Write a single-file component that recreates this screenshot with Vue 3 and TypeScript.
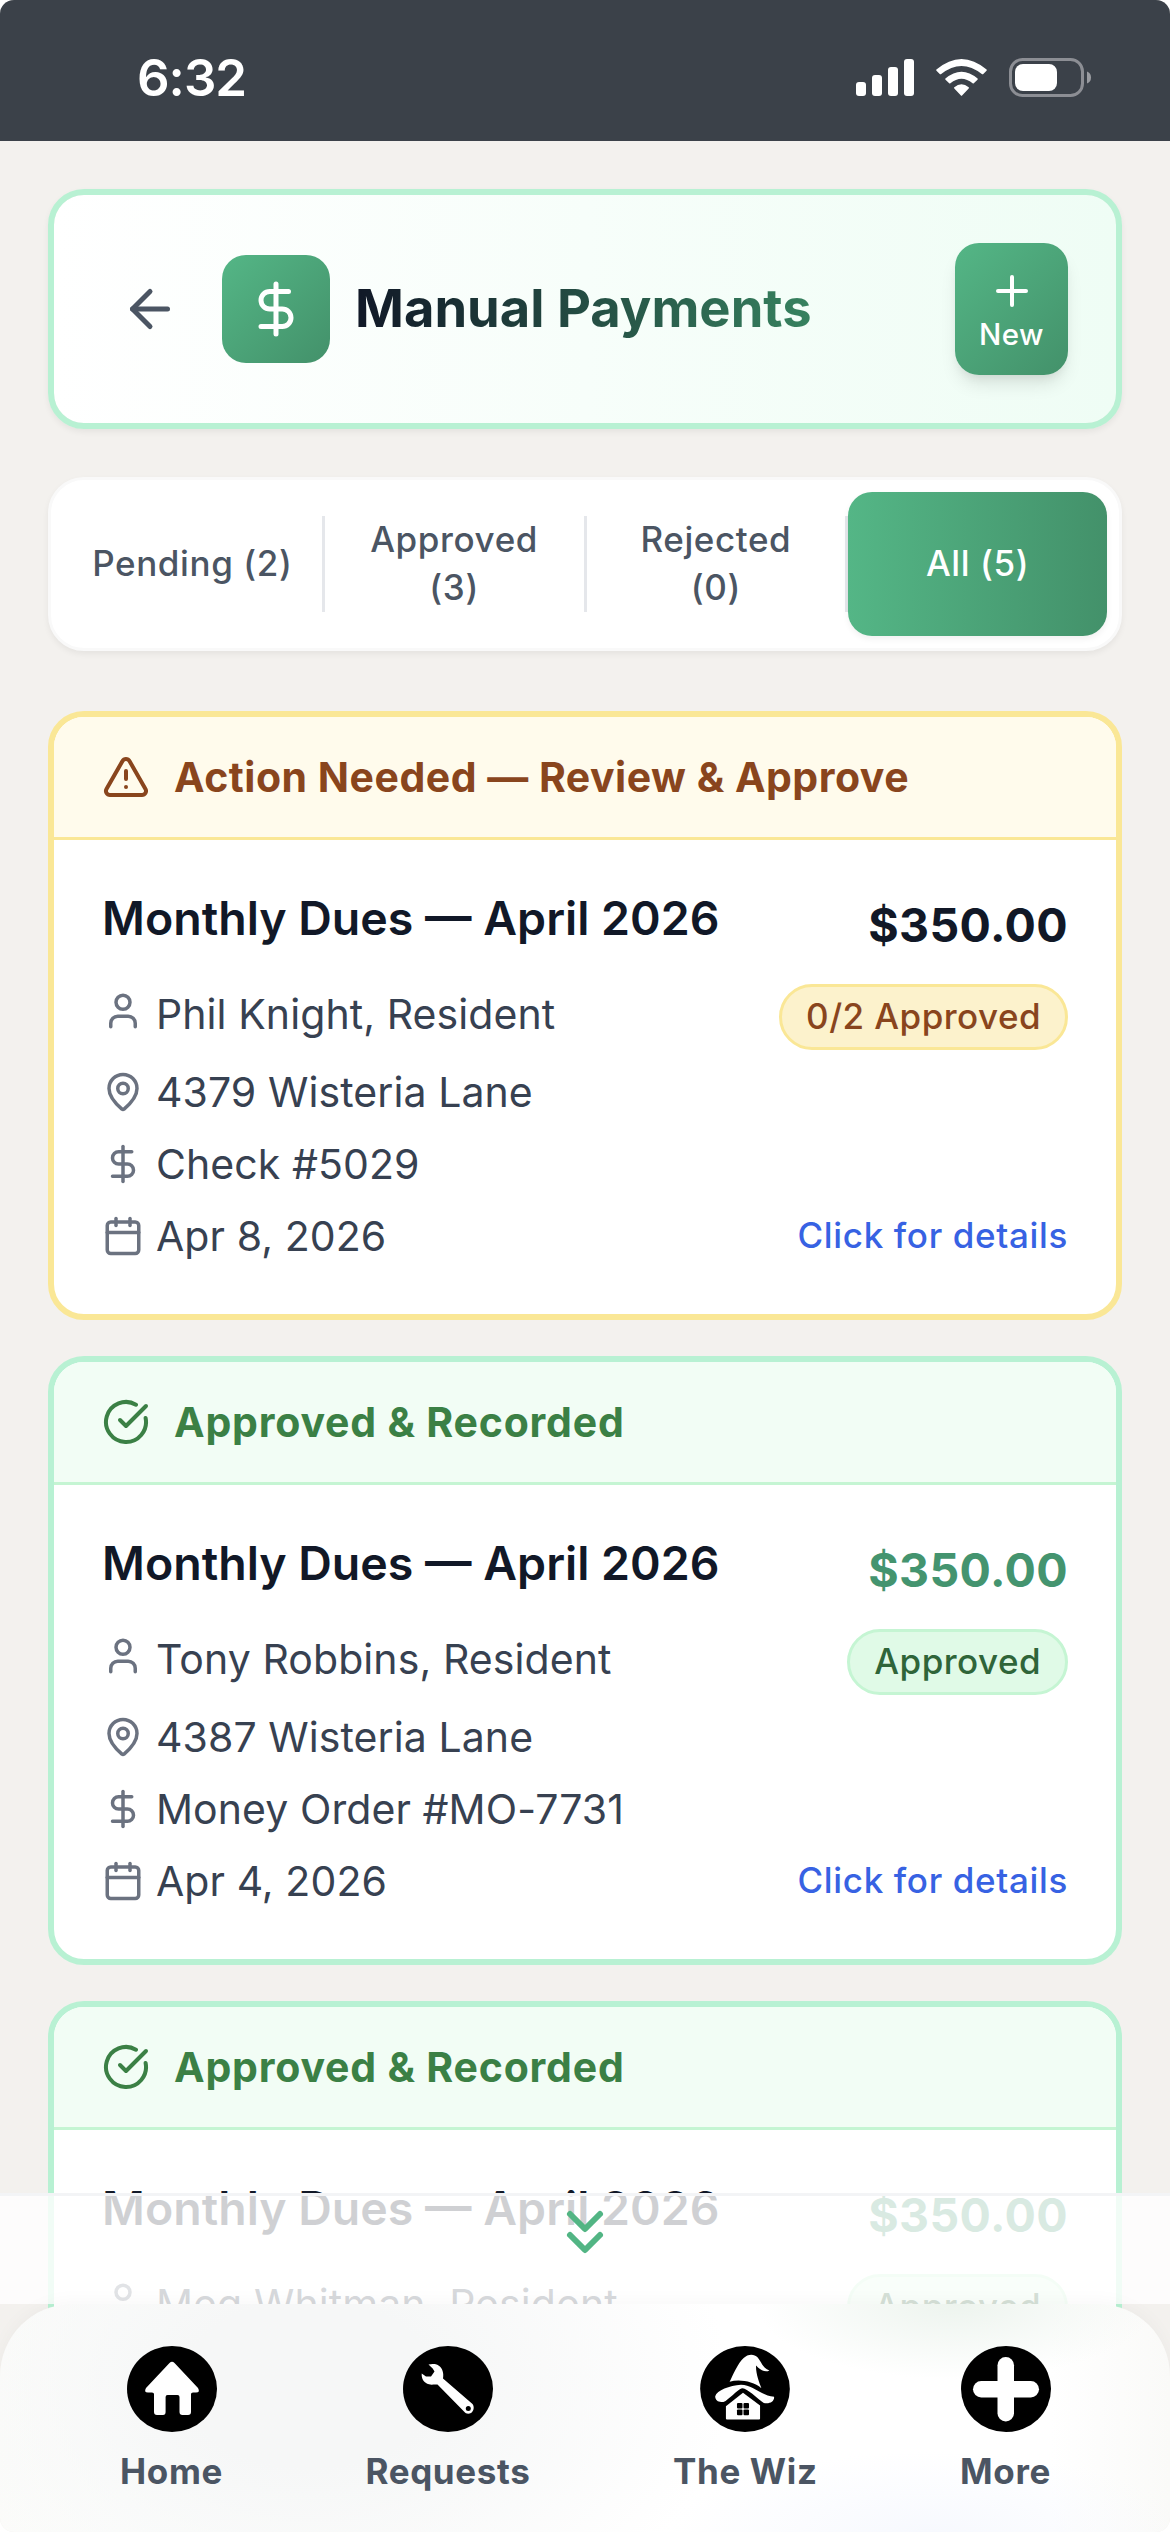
<script setup lang="ts">
interface Tab {
  label: string
  active?: boolean
}

interface Payment {
  id: number
  status: 'pending' | 'approved'
  heading: string
  title: string
  amount: string
  payer: string
  badge: string
  address?: string
  method?: string
  date?: string
}

const tabs: Tab[] = [
  { label: 'Pending (2)' },
  { label: 'Approved (3)' },
  { label: 'Rejected (0)' },
  { label: 'All (5)', active: true },
]

const payments: Payment[] = [
  {
    id: 1,
    status: 'pending',
    heading: 'Action Needed — Review & Approve',
    title: 'Monthly Dues — April 2026',
    amount: '$350.00',
    payer: 'Phil Knight, Resident',
    address: '4379 Wisteria Lane',
    method: 'Check #5029',
    date: 'Apr 8, 2026',
    badge: '0/2 Approved',
  },
  {
    id: 2,
    status: 'approved',
    heading: 'Approved & Recorded',
    title: 'Monthly Dues — April 2026',
    amount: '$350.00',
    payer: 'Tony Robbins, Resident',
    address: '4387 Wisteria Lane',
    method: 'Money Order #MO-7731',
    date: 'Apr 4, 2026',
    badge: 'Approved',
  },
  {
    id: 3,
    status: 'approved',
    heading: 'Approved & Recorded',
    title: 'Monthly Dues — April 2026',
    amount: '$350.00',
    payer: 'Meg Whitman, Resident',
    badge: 'Approved',
  },
]
</script>

<template>
  <div class="screen">
    <div class="status-bar">
      <span class="clock">6:32</span>
      <svg class="status-icons" width="236" height="40" viewBox="856 58 236 40">
        <g fill="#fff">
          <rect x="856" y="82" width="10" height="14" rx="3" />
          <rect x="872" y="75" width="10" height="21" rx="3" />
          <rect x="888" y="67" width="10" height="29" rx="3" />
          <rect x="904" y="59" width="10" height="37" rx="3" />
          <path d="M936.4 69.6 Q961.5 48.400 986.600 69.600 Q987 70.200 986.500 70.800 L983 74.200 Q982.400 74.500 981.800 74.100 Q961.500 57.900 941.200 74.100 Q940.600 74.500 940 74.200 L936.500 70.800 Q936 70.200 936.400 69.600Z" />
          <path d="M945.400 78.500 Q961.500 64.800 977.600 78.500 Q978.100 79.100 977.500 79.700 L973.800 83.300 Q973.200 83.700 972.600 83.300 Q961.500 74.100 950.400 83.300 Q949.800 83.700 949.200 83.300 L945.500 79.700 Q944.900 79.100 945.400 78.500Z" />
          <path d="M954.300 87.200 Q961.500 81.400 968.700 87.200 Q969.300 87.800 968.700 88.500 L962.300 95.200 Q961.500 96.300 960.700 95.200 L954.300 88.500 Q953.700 87.800 954.300 87.200Z" />
          <rect x="1015" y="64" width="42" height="27" rx="8" />
        </g>
        <rect x="1010.500" y="59.500" width="72" height="36" rx="12" fill="none" stroke="#8c8e94" stroke-width="3" />
        <path d="M1087 71.500 Q1091 73 1091 77.500 Q1091 82 1087 83.500Z" fill="#9a9ca1" />
      </svg>
    </div>

    <main class="content">
      <header class="page-header">
        <svg class="icon back" width="60" height="60" viewBox="0 0 24 24"><path d="m12 19-7-7 7-7" /><path d="M19 12H5" /></svg>
        <span class="tile">
          <svg class="icon" width="60" height="60" viewBox="0 0 24 24"><path d="M12 2v20" /><path d="M17 5H9.500a3.500 3.500 0 0 0 0 7h5a3.500 3.500 0 0 1 0 7H6" /></svg>
        </span>
        <h1 class="page-title">Manual Payments</h1>
        <button class="new-btn">
          <svg class="icon" width="48" height="48" viewBox="0 0 24 24"><path d="M5 12h14" /><path d="M12 5v14" /></svg>
          <span>New</span>
        </button>
      </header>

      <nav class="tabs">
        <template v-for="(tab, i) in tabs" :key="tab.label">
          <i v-if="i > 0" class="divider"></i>
          <button class="tab" :class="{ active: tab.active }">{{ tab.label }}</button>
        </template>
      </nav>

      <section class="list">
        <article v-for="p in payments" :key="p.id" class="card" :class="p.status">
          <div class="card-head">
            <svg v-if="p.status === 'pending'" class="icon" width="48" height="48" viewBox="0 0 24 24">
              <path d="m21.730 18-8-14a2 2 0 0 0-3.480 0l-8 14A2 2 0 0 0 4 21h16a2 2 0 0 0 1.730-3" />
              <path d="M12 9v4" /><path d="M12 17h.01" />
            </svg>
            <svg v-else class="icon" width="48" height="48" viewBox="0 0 24 24">
              <path d="M21.801 10A10 10 0 1 1 17 3.335" /><path d="m9 11 3 3L22 4" />
            </svg>
            <span>{{ p.heading }}</span>
          </div>
          <div class="card-body">
            <div class="line top">
              <h2 class="card-title">{{ p.title }}</h2>
              <span class="amount">{{ p.amount }}</span>
            </div>
            <div class="line payer">
              <span class="field">
                <svg class="icon" width="42" height="42" viewBox="0 0 24 24"><path d="M19 21v-2a4 4 0 0 0-4-4H9a4 4 0 0 0-4 4v2" /><circle cx="12" cy="7" r="4" /></svg>
                {{ p.payer }}
              </span>
              <span class="badge">{{ p.badge }}</span>
            </div>
            <div v-if="p.address" class="line">
              <span class="field">
                <svg class="icon" width="42" height="42" viewBox="0 0 24 24"><path d="M20 10c0 4.993-5.539 10.193-7.399 11.799a1 1 0 0 1-1.202 0C9.539 20.193 4 14.993 4 10a8 8 0 0 1 16 0" /><circle cx="12" cy="10" r="3" /></svg>
                {{ p.address }}
              </span>
            </div>
            <div v-if="p.method" class="line">
              <span class="field">
                <svg class="icon" width="42" height="42" viewBox="0 0 24 24"><path d="M12 2v20" /><path d="M17 5H9.500a3.500 3.500 0 0 0 0 7h5a3.500 3.500 0 0 1 0 7H6" /></svg>
                {{ p.method }}
              </span>
            </div>
            <div v-if="p.date" class="line">
              <span class="field">
                <svg class="icon" width="42" height="42" viewBox="0 0 24 24"><path d="M8 2v4" /><path d="M16 2v4" /><rect x="3" y="4" width="18" height="18" rx="2" /><path d="M3 10h18" /></svg>
                {{ p.date }}
              </span>
              <a class="details">Click for details</a>
            </div>
          </div>
        </article>
      </section>
    </main>

    <div class="scroll-hint">
      <svg class="icon" width="72" height="72" viewBox="0 0 24 24"><path d="m7 6 5 5 5-5" /><path d="m7 13 5 5 5-5" /></svg>
    </div>

    <footer class="bottom-nav">
      <a class="nav-item">
        <svg width="90" height="86" viewBox="0 0 90 86">
          <ellipse cx="45" cy="43" rx="45" ry="43" />
          <path fill="#fff" d="M42.500 17Q45 14.500 47.500 17L71 42Q73.500 46.500 69 46.500H66Q64 46.500 64 48V66Q64 69 61 69H55.500Q52.500 69 52.500 66V51Q52.500 49 50.500 49H40.500Q38.600 49 38.600 51V66Q38.600 69 36 69H30Q27 69 27 66V48Q27 46.500 25 46.500H21Q16.500 46.500 19 42Z" />
        </svg>
        <span>Home</span>
      </a>
      <a class="nav-item">
        <svg width="90" height="86" viewBox="0 0 90 86">
          <ellipse cx="45" cy="43" rx="45" ry="43" />
          <path fill="#fff" d="M25.500 18.600C29 17.600 33 17.800 35.500 19.500C39.500 22 41 27 40 32.500L69.500 58C71.500 60.500 71 65 68 67C65.500 68.200 63 68 61 65.500L34.500 38.600C31.500 38 29 39.200 26 38.300C21 36.800 18.300 33 18.700 27.500L23 30.600H28L31.500 25.500L29.700 22.500Z" />
          <circle cx="65.300" cy="62.500" r="2.500" />
        </svg>
        <span>Requests</span>
      </a>
      <a class="nav-item">
        <svg width="90" height="86" viewBox="0 0 268 257">
          <ellipse cx="134" cy="128.500" rx="134" ry="128.500" />
          <g fill="#fff">
            <path d="M88 107C98 88 112 52 130 36C142 24 160 22 172 34C184 48 186 66 207 73C194 80 180 72 167 58C166 82 176 108 183 126C158 106 118 98 88 107Z" />
            <path d="M45 150C50 133 88 118 122 116C158 116 180 148 221 152C222 168 205 174 190 170C170 156 140 126 127 126C117 126 95 150 76 164C62 172 44 166 45 150Z" />
            <path d="M128 140L179 178V217Q179 220 176 220H80Q77 220 77 217V180Z" />
          </g>
          <rect x="110" y="170" width="16.500" height="17" rx="3" />
          <rect x="129.500" y="170" width="16.500" height="17" rx="3" />
          <rect x="110" y="190" width="16.500" height="17" rx="3" />
          <rect x="129.500" y="190" width="16.500" height="17" rx="3" />
        </svg>
        <span>The Wiz</span>
      </a>
      <a class="nav-item">
        <svg width="90" height="86" viewBox="0 0 90 86">
          <ellipse cx="45" cy="43" rx="45" ry="43" />
          <rect x="36.500" y="11" width="16.500" height="64.500" rx="8.200" fill="#fff" />
          <rect x="12" y="35" width="66" height="16.500" rx="8.200" fill="#fff" />
        </svg>
        <span>More</span>
      </a>
    </footer>
  </div>
</template>

<style>
body {
  margin: 0;
  background: #fff;
}
</style>

<style scoped>
.screen {
  position: relative;
  width: 1170px;
  height: 2532px;
  overflow: hidden;
  border-radius: 14px;
  background: #f3f1ee;
  font-family: Inter, "Liberation Sans", sans-serif;
}

button {
  border: 0;
  margin: 0;
  padding: 0;
  background: none;
  font: inherit;
}

.icon {
  flex: none;
  fill: none;
  stroke: currentColor;
  stroke-width: 2;
  stroke-linecap: round;
  stroke-linejoin: round;
}

.status-bar {
  display: flex;
  align-items: center;
  justify-content: space-between;
  box-sizing: border-box;
  height: 141px;
  padding: 15px 78px 0 137px;
  background: #3b4149;
}

.clock {
  color: #fff;
  font-size: 51px;
  font-weight: 600;
  letter-spacing: -1px;
  line-height: 60px;
}

.content {
  padding: 48px 48px 0;
}

.page-header {
  display: flex;
  align-items: center;
  box-sizing: border-box;
  height: 240px;
  padding: 0 48px 0 66px;
  border: 6px solid #b8f1d3;
  border-radius: 36px;
  background: linear-gradient(90deg, #fff, #effdf5) padding-box;
  box-shadow: 0 3px 6px rgba(0, 0, 0, 0.06);
}

.back {
  color: #4b5563;
}

.tile {
  display: flex;
  align-items: center;
  justify-content: center;
  width: 108px;
  height: 108px;
  margin: 0 25px 0 42px;
  border-radius: 24px;
  background: linear-gradient(135deg, #54b686, #43916a);
  color: #fff;
}

.page-title {
  margin: 0 0 2px;
  background: linear-gradient(90deg, #111827, #37825f);
  background-clip: text;
  color: transparent;
  font-size: 52.500px;
  font-weight: 700;
  line-height: 72px;
  white-space: nowrap;
}

.new-btn {
  display: flex;
  flex-direction: column;
  align-items: center;
  box-sizing: border-box;
  width: 113px;
  height: 132px;
  margin-left: auto;
  padding-top: 24px;
  border-radius: 24px;
  background: linear-gradient(135deg, #54b686, #43916a);
  box-shadow: 0 12px 18px -3px rgba(0, 0, 0, 0.1), 0 6px 12px -6px rgba(0, 0, 0, 0.1);
  color: #fff;
  font-size: 29.500px;
  font-weight: 500;
  letter-spacing: 0.4px;
  line-height: 38px;
}

.tabs {
  display: flex;
  align-items: center;
  box-sizing: border-box;
  height: 174px;
  margin-top: 48px;
  padding: 12px;
  border: 3px solid #f9f9f9;
  border-radius: 36px;
  background: #fff;
  box-shadow: 0 3px 6px rgba(0, 0, 0, 0.06);
}

.divider {
  width: 3px;
  height: 96px;
  background: #e5e7eb;
}

.tab {
  flex: 1 1 0;
  box-sizing: border-box;
  min-width: 0;
  height: 144px;
  padding: 0 27px 2px;
  border-radius: 24px;
  color: #4b5563;
  font-size: 35px;
  font-weight: 500;
  letter-spacing: 0.6px;
  line-height: 48px;
}

.tab.active {
  background: linear-gradient(90deg, #54b686, #43916a);
  box-shadow: 0 3px 6px rgba(0, 0, 0, 0.06);
  color: #fff;
}

.list {
  display: flex;
  flex-direction: column;
  gap: 36px;
  margin-top: 60px;
}

.card {
  box-sizing: border-box;
  height: 609px;
  overflow: hidden;
  border: 6px solid #b8f1d3;
  border-radius: 36px;
  background: #fff;
}

.card-head {
  display: flex;
  align-items: center;
  gap: 24px;
  height: 120px;
  padding: 0 48px;
  border-bottom: 3px solid #c5f5d3;
  background: #f2fdf5;
  color: #3b8045;
  font-size: 41px;
  font-weight: 700;
  letter-spacing: 0.8px;
}

.pending {
  border-color: #fae796;
}

.pending .card-head {
  border-color: #fae796;
  background: #fffbec;
  color: #89451d;
  letter-spacing: 0.5px;
}

.card-body {
  display: flex;
  flex-direction: column;
  gap: 12px;
  padding: 48px;
}

.line {
  display: flex;
  align-items: flex-start;
  justify-content: space-between;
  height: 60px;
}

.line.top {
  margin-bottom: 24px;
}

.line.payer {
  height: 66px;
}

.payer .icon {
  margin-bottom: 6px;
}

.card-title {
  margin: 0;
  color: #111827;
  font-size: 46.500px;
  font-weight: 600;
  line-height: 61px;
}

.amount {
  color: #44946f;
  font-size: 46.500px;
  font-weight: 700;
  letter-spacing: 0.4px;
  line-height: 74px;
}

.pending .amount {
  color: #111827;
}

.field {
  display: flex;
  align-items: center;
  gap: 12px;
  color: #374151;
  font-size: 41px;
  letter-spacing: 0.08px;
  line-height: 60px;
}

.field .icon {
  color: #6b7280;
}

.badge {
  box-sizing: border-box;
  height: 66px;
  padding: 0 24px;
  border: 3px solid #c5f5d3;
  border-radius: 33px;
  background: #e0fae7;
  color: #2f6539;
  font-size: 35px;
  font-weight: 500;
  letter-spacing: 0.45px;
  line-height: 58px;
}

.pending .badge {
  border-color: #fae796;
  background: #fcf2cc;
  color: #89451d;
}

.details {
  color: #3762e3;
  font-size: 35px;
  font-weight: 500;
  letter-spacing: 0.65px;
  line-height: 58px;
}

.scroll-hint {
  position: absolute;
  top: 2193px;
  left: 0;
  right: 0;
  display: flex;
  align-items: center;
  justify-content: center;
  height: 108px;
  border-top: 3px solid #f3f4f6;
  background: rgba(255, 255, 255, 0.8);
  background-clip: padding-box;
  color: #52b584;
}

.scroll-hint .icon {
  margin-bottom: 36px;
}

.bottom-nav {
  position: absolute;
  left: 0;
  right: 0;
  bottom: 0;
  display: flex;
  align-items: flex-start;
  justify-content: space-between;
  box-sizing: border-box;
  height: 228px;
  padding: 42px 119px 0 120px;
  border-radius: 72px 72px 0 0;
  background:
    radial-gradient(200px 75px at 955px 0, #edf4ee, rgba(243, 249, 244, 0)),
    radial-gradient(260px 80px at 930px 228px, #f7f9fe, rgba(250, 251, 255, 0)),
    linear-gradient(90deg, rgba(251, 251, 249, 0) 1050px, #fafaf8),
    radial-gradient(420px 280px at 310px 80px, #f6f7f7 30%, rgba(250, 250, 250, 0)),
    linear-gradient(90deg, #fcfcfa, #fdfefd 120px, #fff 500px);
  box-shadow: 0 -3px 18px rgba(0, 0, 0, 0.03);
}

.nav-item {
  display: flex;
  flex-direction: column;
  align-items: center;
  color: #4b5563;
  font-size: 35px;
  font-weight: 700;
  letter-spacing: 0.65px;
  line-height: 48px;
}

.nav-item span {
  margin-top: 15px;
}
</style>
